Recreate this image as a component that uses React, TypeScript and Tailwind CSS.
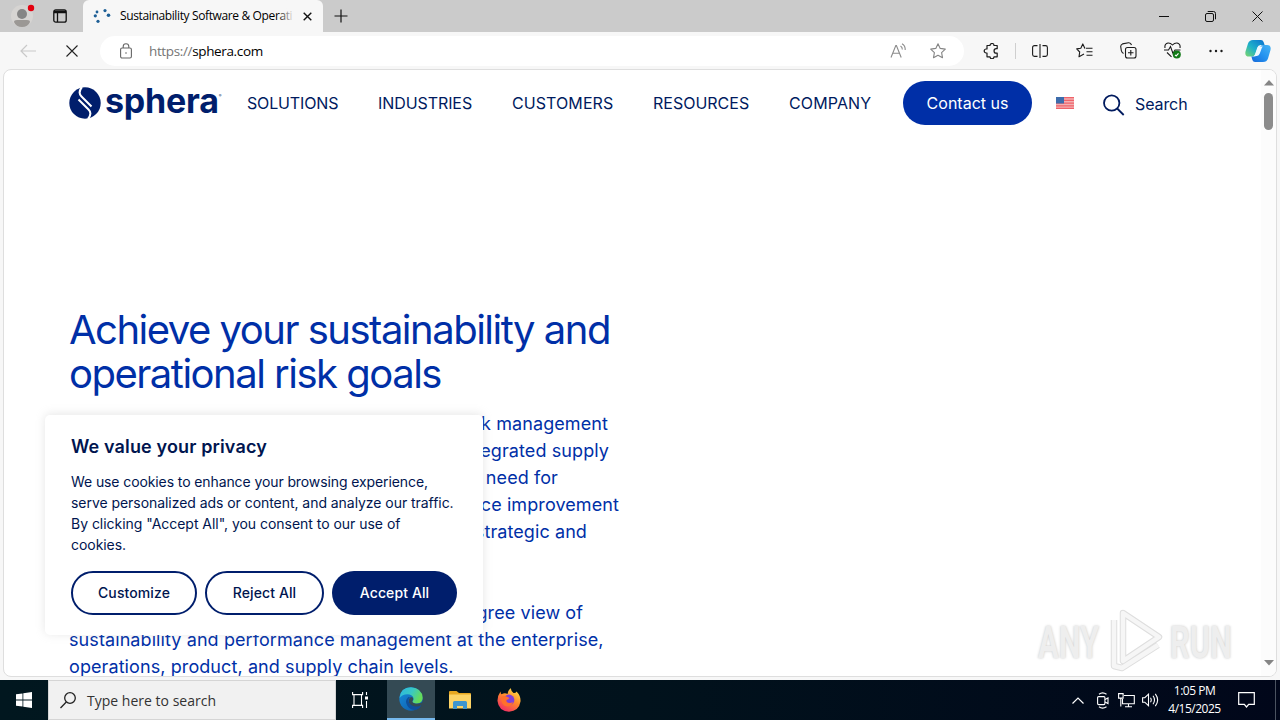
import React from "react";

const navItems = [
  { label: "SOLUTIONS", className: "w-[91px] mr-10 tracking-[-0.150px]" },
  { label: "INDUSTRIES", className: "w-[94px] mr-10 tracking-[-0.080px]" },
  { label: "CUSTOMERS", className: "w-[101px] mr-10 tracking-[0.080px]" },
  { label: "RESOURCES", className: "w-[96px] mr-10" },
  { label: "COMPANY", className: "w-[82px] mr-8 tracking-[0.120px]" },
];

const introLines = [
  { text: "k management", className: "w-[539px]" },
  { text: "egrated supply", className: "w-[540px]" },
  { text: "need for", className: "w-[489px]" },
  { text: "ce improvement", className: "w-[550px]" },
  { text: "strategic and", className: "w-[518px]" },
];

const TitleBar = () => (
  <div className="flex h-8 bg-[#cbcbcb] text-black">
    <div className="flex w-[83px] items-center rounded-br-md pl-[10px]">
      <svg width="26" height="28" viewBox="0 0 26 28">
        <circle cx="12" cy="14" r="11" fill="#d6d4d2" />
        <circle cx="12" cy="12" r="5" fill="#858585" />
        <path d="M4 20q0-2 3-2h10q3 0 3 2-2 5-8 5t-8-5z" fill="#9b9895" />
        <circle cx="21" cy="6" r="3.2" fill="#e3000f" />
      </svg>
      <svg className="ml-[17px]" width="14" height="14" viewBox="0 0 14 14" fill="none" stroke="#111" strokeWidth="1.3">
        <rect x=".8" y=".8" width="12.4" height="12.4" rx="2" />
        <path d="M1 2.2h12M1 3.500h12M4.5 3v10" />
      </svg>
    </div>
    <div className="flex w-[240px] items-center rounded-t-md bg-[#f7f7f7] pl-[10px]">
      <svg width="18" height="16" viewBox="0 0 18 16" fill="#1d5f96">
        <circle cx="4" cy="4" r="1.4" />
        <circle cx="2.3" cy="7.8" r="1.6" />
        <circle cx="5" cy="13.3" r="1.6" />
        <circle cx="12" cy="2.6" r="1.6" />
        <circle cx="15.5" cy="7.3" r="1.8" />
      </svg>
      <div className="relative ml-[9px] w-[174px] whitespace-nowrap font-['Open_Sans',sans-serif] text-[12px] leading-8 tracking-[-0.37px]">
        Sustainability Software &amp; Operati
        <span className="absolute right-0 top-0 h-8 w-4 bg-gradient-to-r from-transparent to-[#f7f7f7]" />
      </div>
      <svg className="ml-[9px]" width="9" height="9" viewBox="0 0 9 9" stroke="#111" strokeWidth="1.4">
        <path d="M.7.7l7.6 7.6M8.3.7L.7 8.3" />
      </svg>
    </div>
    <div className="flex flex-1 items-center rounded-bl-md pl-[11px]">
      <svg width="14" height="14" viewBox="0 0 14 14" stroke="#111" strokeWidth="1.2">
        <path d="M7 .5v13M.5 7h13" />
      </svg>
      <svg className="ml-auto" width="10" height="10" viewBox="0 0 10 10" stroke="#111" strokeWidth="1">
        <path d="M0 5.5h10" />
      </svg>
      <svg className="ml-[36px]" width="11" height="11" viewBox="0 0 11 11" fill="none" stroke="#111">
        <rect x=".5" y="2.5" width="8" height="8" rx="1.5" />
        <path d="M2.7.5H8.5a2 2 0 0 1 2 2v5.8" />
      </svg>
      <svg className="ml-[36px] mr-[17px]" width="11" height="11" viewBox="0 0 11 11" stroke="#111">
        <path d="M.5.5l10 10M10.5.5l-10 10" />
      </svg>
    </div>
  </div>
);

const Copilot = () => (
  <svg width="26" height="24" viewBox="0 0 26 24">
    <defs>
      <linearGradient id="cpA" x1="0" y1="1" x2="1" y2="0">
        <stop offset="0" stopColor="#7bd66b" />
        <stop offset=".45" stopColor="#1fb1c9" />
        <stop offset="1" stopColor="#0b6fd0" />
      </linearGradient>
      <linearGradient id="cpB" x1="0" y1="1" x2="1" y2="0">
        <stop offset="0" stopColor="#1668d8" />
        <stop offset=".5" stopColor="#2493f0" />
        <stop offset="1" stopColor="#48b4f4" />
      </linearGradient>
    </defs>
    <path d="M8 1h8q2 0 2.600 2l1 3h-4q-2.500 0-3.300 2.500L10 15.500q-.8 2-3 2H4q-4.500 0-3.500-5L3 4.500Q4.200 1 8 1z" fill="url(#cpA)" />
    <path d="M18 23h-8q-2 0-2.600-2l-1-3.500h3q2.300 0 3.200-2.500l2.400-7q.8-2 3-2h4q4.500 0 3.500 5l-2.500 8.500Q21.800 23 18 23z" fill="url(#cpB)" />
    <path d="M13.300 7.500h4.500l-1 1.500-2 5.500q-.8 2-3 2.500H9.300l1-2z" fill="#eef8ff" />
  </svg>
);

const Toolbar = () => (
  <div className="flex h-[37px] items-center bg-[#f7f7f7]">
    <svg className="ml-5" width="16" height="14" viewBox="0 0 16 14" fill="none" stroke="#c9c9c9" strokeWidth="1.2">
      <path d="M16 7H1M7 1L1 7l6 6" />
    </svg>
    <svg className="ml-[30px]" width="12" height="12" viewBox="0 0 12 12" stroke="#222" strokeWidth="1.1">
      <path d="M.5.500l11 11M11.500.500l-11 11" />
    </svg>
    <div className="ml-[22px] flex h-[30px] w-[864px] items-center rounded-full bg-white pl-[20px]">
      <svg width="12" height="16" viewBox="0 0 12 16" fill="none" stroke="#666" strokeWidth="1.1">
        <rect x=".6" y="5" width="10.800" height="10" rx="1.500" />
        <path d="M3.200 5V3.500a2.800 2.800 0 0 1 5.600 0V5" />
        <circle cx="6" cy="10" r=".8" fill="#666" stroke="none" />
      </svg>
      <span className="ml-[17px] mt-px font-['Open_Sans',sans-serif] text-[13.500px] tracking-[-0.360px] text-[#757575]">
        https://<span className="text-black">sphera.com</span>
      </span>
      <svg className="ml-auto" width="17" height="16" viewBox="0 0 17 16" fill="none" stroke="#8a8a8a" strokeWidth="1.1">
        <path d="M1 14.500L5.800 2.500h.6l4.800 12M2.800 10.300h6.600M10.500 3q2 1.200 1.800 3.500M12 .7q3.500 2 3.200 6.300" />
      </svg>
      <svg className="ml-[23px] mr-[18px]" width="16" height="16" viewBox="0 0 16 16" fill="none" stroke="#858585" strokeWidth="1.100" strokeLinejoin="round">
        <path d="M8 .8l2.200 4.600 5.100.7-3.700 3.500.9 5.100L8 12.300l-4.500 2.400.9-5.100L.7 6.100l5.100-.7z" />
      </svg>
    </div>
    <svg className="ml-[19px]" width="16" height="16" viewBox="0 0 16 16" fill="none" stroke="#1b1b1b" strokeWidth="1.200" strokeLinejoin="round">
      <path d="M4 2.500h3a2 2 0 0 1 4 0h3.200v3.200h-.9a2.200 2.200 0 0 0 0 4.500h.9v3.600H11a2 2 0 0 1-4 0H4V10h-.8a2 2 0 0 1 0-4H4z" />
    </svg>
    <div className="ml-4 h-4 w-px bg-[#cfcfcf]" />
    <svg className="ml-4" width="16" height="14" viewBox="0 0 16 14" fill="none" stroke="#1b1b1b" strokeWidth="1.100">
      <path d="M5.500 1.600h-3Q.6 1.600.6 3.500v7q0 1.900 1.900 1.900h3M10.500 1.600h3q1.900 0 1.900 1.900v7q0 1.900-1.900 1.900h-3M8 0v14" />
    </svg>
    <svg className="ml-[28px]" width="17" height="16" viewBox="0 0 17 16" fill="none" stroke="#1b1b1b" strokeWidth="1.100" strokeLinejoin="round">
      <path d="M9.800 5.300h6.700M10.500 8.800h6M10.500 12.300h6M9 5.300H8.800L6.800.9 4.800 5.300.7 5.900l3 3.100-.7 4.800 5-2.700" />
    </svg>
    <svg className="ml-[27px]" width="17" height="17" viewBox="0 0 17 17" fill="none" stroke="#1b1b1b" strokeWidth="1.100">
      <rect x="5.500" y="5.500" width="10.500" height="10.500" rx="2" />
      <path d="M10.800 8v5.500M8 10.700h5.500M3.500 11.500Q1.700 10.500 1.300 8.500L.7 4.500q0-2 1.800-2.600L8.500.8q2.300-.2 3 2.200" />
    </svg>
    <svg className="ml-[27px]" width="18" height="17" viewBox="0 0 18 17" fill="none" stroke="#1b1b1b" strokeWidth="1.100">
      <path d="M1 6Q.3 1.700 4 1q2.500-.2 4.500 2 2-2.200 4.500-2 3.700.7 3 5M0 8h4.500L6.500 4.500l2.500 7L11 8h5.500M3 10.500l4.500 4.300" />
      <circle cx="12.800" cy="12.500" r="4" fill="#127a17" stroke="none" />
      <path d="M11 12.800l1.200 1.100 2.300-2.600" stroke="#fff" />
    </svg>
    <svg className="ml-[27px]" width="14" height="4" viewBox="0 0 14 4" fill="#1b1b1b">
      <circle cx="1.500" cy="2" r="1.200" />
      <circle cx="7" cy="2" r="1.200" />
      <circle cx="12.500" cy="2" r="1.200" />
    </svg>
    <div className="ml-auto mr-[9px]">
      <Copilot />
    </div>
  </div>
);

const SiteHeader = () => (
  <header className="flex h-[66px] items-center pl-[65px] font-[Inter,sans-serif] text-[16px] text-[#001a5e]">
    <div className="flex w-[178px] items-center">
      <svg width="32" height="32" viewBox="0 0 32 32">
        <circle cx="16" cy="16" r="15.700" fill="#001e6c" />
        <g fill="none" stroke="#fff" strokeWidth="2">
          <path d="M13 0Q8.500 5.500 12.500 9.500L22.500 19.500" />
          <path d="M19 32q4.500-5.500.5-9.500L9.500 12.500" />
        </g>
      </svg>
      <span className="ml-[4px] mt-[-5px] text-[34px] font-bold leading-8 tracking-[-0.200px] text-[#001e6c]">sphera</span>
      <span className="mt-[-15px] text-[4px] leading-none">®</span>
    </div>
    {navItems.map((item) => (
      <span key={item.label} className={`whitespace-nowrap ${item.className}`}>
        {item.label}
      </span>
    ))}
    <button className="h-11 w-[129px] rounded-full bg-[#002fa7] text-white">Contact us</button>
    <svg className="ml-6" width="18" height="12" viewBox="0 0 18 12">
      <rect width="18" height="12" fill="#f3b0b3" />
      <path d="M0 .7h18M0 3.400h18M0 6.100h18M0 8.800h18M0 11.400h18" stroke="#f0636a" strokeWidth="1.200" />
      <rect width="8" height="6.500" fill="#3d6cab" />
    </svg>
    <svg className="ml-[29px] mt-[3px]" width="22" height="22" viewBox="0 0 22 22" fill="none" stroke="#001a5e" strokeWidth="1.800">
      <circle cx="8.700" cy="9" r="7.700" />
      <path d="M14.200 14.500l6.500 6.500" />
    </svg>
    <span className="ml-[10px] mt-[2px] tracking-[-0.100px]">Search</span>
  </header>
);

const Hero = () => (
  <section className="pl-[65px] pt-[172px] font-[Inter,sans-serif] text-[#002fa7]">
    <h1 className="whitespace-nowrap text-[40px] leading-[44px] tracking-[-1.500px]">
      Achieve your sustainability and
      <br />
      operational risk goals
    </h1>
    <div className="mt-[14px] whitespace-nowrap text-[18px] leading-[27px] tracking-[0.090px]">
      {introLines.map((line) => (
        <p key={line.text} className={`text-right ${line.className}`}>
          {line.text}
        </p>
      ))}
      <p className="mt-[54px] w-[514px] text-right">gree view of</p>
      <p>sustainability and performance management at the enterprise,</p>
      <p>operations, product, and supply chain levels.</p>
    </div>
  </section>
);

const CookieBanner = () => (
  <div className="absolute left-[41px] top-[345px] h-[220px] w-[438px] rounded-[5px] bg-white px-[26px] pt-[18px] font-[Inter,sans-serif] text-[#00154f] shadow-[0_-1px_10px_0_#acabab4d]">
    <h2 className="text-[18px] font-semibold leading-[27px] tracking-[0.140px]">We value your privacy</h2>
    <p className="mt-[11px] whitespace-nowrap text-[14px] leading-[21px] tracking-[-0.050px]">
      <span className="tracking-[-0.100px]">We use cookies to enhance your browsing experience,</span>
      <br />
      serve personalized ads or content, and analyze our traffic.
      <br />
      <span className="tracking-[-0.030px]">By clicking "Accept All", you consent to our use of</span>
      <br />
      cookies.
    </p>
    <div className="mt-[16px] flex gap-2 text-[14px] font-medium tracking-[0.100px]">
      <button className="h-11 w-[126px] shrink-0 rounded-full border-2 border-[#001e6c] pb-px">Customize</button>
      <button className="h-11 w-[119px] shrink-0 rounded-full border-2 border-[#001e6c] pb-px">Reject All</button>
      <button className="h-11 w-[125px] shrink-0 rounded-full bg-[#001e6c] pb-px text-white">Accept All</button>
    </div>
  </div>
);

// translucent mark over the bottom right corner of the page
const Watermark = () => (
  <div className="absolute right-[43px] top-[538px] flex h-16 w-[195px] items-center justify-between font-[Roboto,sans-serif] text-[44px] font-bold leading-none text-[#eeeeee] [text-shadow:0_0_3px_#c4c4c4]">
    <span className="mt-[5px] w-[63px] origin-left scale-x-[0.700]">ANY</span>
    <svg width="62" height="64" viewBox="0 0 62 64" fill="none">
      <g stroke="#dedede" strokeWidth="6.500" strokeLinejoin="round">
        <path d="M18 5l36 24-36 24z" />
        <path d="M9 12v46l8 2 36-23" />
      </g>
      <g stroke="#f6f6f6" strokeWidth="4.500" strokeLinejoin="round">
        <path d="M18 5l36 24-36 24z" />
        <path d="M9 12v46l8 2 36-23" />
      </g>
    </svg>
    <span className="mt-[5px] w-[63px] origin-left scale-x-[0.700]">RUN</span>
  </div>
);

const Scrollbar = () => (
  <div className="absolute right-0 top-0 flex h-full w-[15px] flex-col items-center bg-[#fcfcfc] pb-[10px] pt-[10px]">
    <svg width="10" height="6" viewBox="0 0 10 6">
      <path d="M5 0l5 5.500H0z" fill="#858585" />
    </svg>
    <div className="mt-[7px] h-[37px] w-[9px] rounded-full bg-[#8b8b8b]" />
    <svg className="mt-auto" width="10" height="6" viewBox="0 0 10 6">
      <path d="M5 5.500L0 0h10z" fill="#858585" />
    </svg>
  </div>
);

const Taskbar = () => (
  <div className="flex h-10 bg-gradient-to-r from-[#01171f] via-[#01121c] to-[#01071a] font-['Open_Sans',sans-serif] text-white">
    <div className="flex w-12 items-center justify-center">
      <svg width="16" height="16" viewBox="0 0 16 16" fill="#fff">
        <path d="M0 2.300L6.500 1.400v6.200H0zM7.300 1.300L16 0v7.600H7.300zM0 8.400h6.500v6.200L0 13.700zM7.300 8.400H16V16l-8.700-1.300z" />
      </svg>
    </div>
    <div className="flex w-72 items-center border border-[#d5d5d5] bg-[#f1f1f1] pl-[11px] text-[14px] tracking-[0.010px] text-[#333]">
      <svg width="16" height="17" viewBox="0 0 16 17" fill="none" stroke="#222" strokeWidth="1.300">
        <circle cx="10" cy="6" r="5.300" />
        <path d="M6.300 10L.5 16" />
      </svg>
      <span className="ml-[11px]">Type here to search</span>
    </div>
    <div className="flex w-[51px] items-center pl-4">
      <svg width="17" height="16" viewBox="0 0 17 16" fill="none" stroke="#fff" strokeWidth="1.100">
        <path d="M.6 0v2.600h10V0M.6 16v-2.600h10V16M2 3v10M9.500 3v10M14.500 0v3M14.500 9v7" />
        <path d="M13 6h3" strokeWidth="3" />
      </svg>
    </div>
    <div className="flex w-12 items-center justify-center border-b-2 border-[#76b9ed] bg-[#344a54]">
      <svg width="24" height="24" viewBox="0 0 24 24">
        <defs>
          <linearGradient id="edgeTop" x1="0" y1="0" x2="1" y2=".4">
            <stop offset="0" stopColor="#2cb5e2" />
            <stop offset=".55" stopColor="#39c8c4" />
            <stop offset="1" stopColor="#66dc58" />
          </linearGradient>
          <linearGradient id="edgeBottom" x1="0" y1="0" x2="1" y2="1">
            <stop offset="0" stopColor="#168edc" />
            <stop offset="1" stopColor="#0e57a5" />
          </linearGradient>
        </defs>
        <circle cx="12" cy="12" r="11.700" fill="url(#edgeBottom)" />
        <path d="M.5 11Q1.500.3 12 .3 23 1 23.700 11q-.2 5-5.700 5.500-4.500 0-4.700-2 1.700-1.300 1.200-3.500Q13 7.300 8.500 7.300 3 7.500.5 11z" fill="url(#edgeTop)" />
        <path d="M12 10q-3 1.500-2 6 2 5 8 4.500 2 0 4.200-2L24 16.500q0-1.500-1.700-.8-3.300 1.700-6.300.8-3-.7-2.700-2.200 1.300-1.300.7-3.500z" fill="#344a54" />
        <path d="M9.500 10q-4.500 3.500-1 9 2.500 4 8 4 4-1 6-5-3.500 2.300-7.300 1.300-5-1.500-5.700-5.300-.2-2.500 1.500-4z" fill="#0f4f9b" />
      </svg>
    </div>
    <div className="flex w-[49px] items-center justify-center">
      <svg width="22" height="20" viewBox="0 0 22 20">
        <path d="M0 2Q0 1 1 1h6.500L10 3h11q1 0 1 1v14H0z" fill="#e8a820" />
        <path d="M0 4.500h22V18.500H0z" fill="#fdd466" />
        <path d="M4 19v-6.500q0-1.500 1.500-1.500h11q1.500 0 1.500 1.500V19h-4v-3H8v3z" fill="#3d96d0" />
      </svg>
    </div>
    <div className="flex w-[49px] items-center justify-center">
      <svg width="24" height="24" viewBox="0 0 24 24">
        <defs>
          <linearGradient id="fox" x1=".8" y1="0" x2=".2" y2="1">
            <stop offset="0" stopColor="#ffe14a" />
            <stop offset=".45" stopColor="#ff8a2a" />
            <stop offset="1" stopColor="#f0256a" />
          </linearGradient>
        </defs>
        <path d="M14 0q-.5 2.500 2.500 5 2.300.3 3-1.500Q24 8 23.500 13.500 22 23 12 23.700 1.500 23 .5 13 .3 8 3.500 3.500q0 2 1 2.700Q8 4.500 10.500 6 11 2 14 0z" fill="url(#fox)" />
        <circle cx="12" cy="12" r="5.400" fill="#8040d8" />
        <path d="M4 9q3-2 6.500 0l2 1q-1 1.500-3 2-.5 2 1.500 2.800 3 .5 5-.8-1 4.500-5.500 4.500Q4 18 4 9z" fill="#ff702c" />
      </svg>
    </div>
    <div className="ml-auto flex items-center">
      <svg width="12" height="7" viewBox="0 0 12 7" fill="none" stroke="#fff" strokeWidth="1.200">
        <path d="M.5 6.500L6 1l5.500 5.500" />
      </svg>
      <svg className="ml-[13px]" width="12" height="17" viewBox="0 0 12 17" fill="none" stroke="#fff" strokeWidth="1.100">
        <rect x=".6" y="4.600" width="7.300" height="8" rx="1" />
        <path d="M8 7.500l3-1.500v5.500L8 10M2 2.300Q5.500-.5 9.500 2.300M2 14.800q3.500 2.700 7.500 0" />
      </svg>
      <svg className="ml-[9px]" width="17" height="15" viewBox="0 0 17 15" fill="none" stroke="#fff" strokeWidth="1.100">
        <path d="M6 2.500h10.300v8.300H4.500V6M10.500 11v3M7 13.800h7M.6.600h4.500v4.500H.6zM2.800 5v8.500" />
      </svg>
      <svg className="ml-[7px]" width="17" height="14" viewBox="0 0 17 14" fill="none" stroke="#fff" strokeWidth="1.100">
        <path d="M.6 4.700h2.200L6.500 1.200v11.500L2.800 9.200H.6zM8.500 4.800q1.500 2.200 0 4.400M11 2.800q3 4.200 0 8.400M13.300.8q4.700 6.200 0 12.400" />
      </svg>
      <div className="ml-[5px] w-[61px] whitespace-nowrap text-center text-[12px] leading-[18px] tracking-[-0.500px]">
        <div>1:05 PM</div>
        <div>4/15/2025</div>
      </div>
      <svg className="ml-[13px]" width="17" height="16" viewBox="0 0 17 16" fill="none" stroke="#fff" strokeWidth="1.200">
        <path d="M.7.700h15.600v11.600h-5.600L8.500 15l-2.200-2.700H.7z" />
      </svg>
      <div className="ml-5 mr-1 h-10 w-px bg-[#4b5360]" />
    </div>
  </div>
);

const App = () => {
  return (
    <div className="flex h-[720px] w-[1280px] flex-col overflow-hidden bg-[#f7f7f7]">
      <TitleBar />
      <Toolbar />
      <div className="h-[611px] px-[3px]">
        <main className="relative h-[608px] overflow-hidden rounded-lg border border-[#dedede] bg-white">
          <SiteHeader />
          <Hero />
          <CookieBanner />
          <Watermark />
          <Scrollbar />
        </main>
      </div>
      <Taskbar />
    </div>
  );
};

export default App;
